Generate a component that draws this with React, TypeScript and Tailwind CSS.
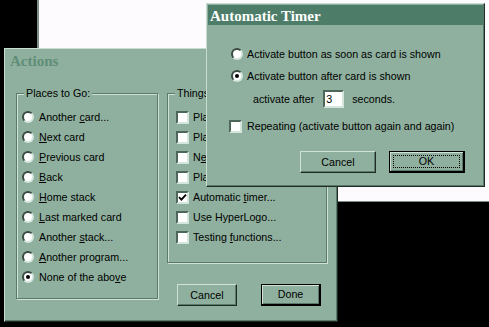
import React from 'react';

const font = { fontFamily: '"Liberation Sans", Arial, sans-serif' };

function Radio({ checked = false }: { checked?: boolean }) {
  return (
    <span className="relative flex h-[12px] w-[12px] shrink-0 items-center justify-center rounded-full border-2 border-t-[#3c4a44] border-l-[#3c4a44] border-r-[#d4e5dc] border-b-[#d4e5dc] bg-white">
      {checked && <span className="h-[4px] w-[4px] rounded-full bg-black" />}
    </span>
  );
}

function Check({ checked = false }: { checked?: boolean }) {
  return (
    <span className="flex h-[13px] w-[13px] shrink-0 items-center justify-center border-2 border-t-[#4d675b] border-l-[#4d675b] border-r-[#d4e5dc] border-b-[#d4e5dc] bg-white">
      {checked && (
        <svg width="9" height="9" viewBox="0 0 9 9">
          <path d="M1 4.2 L3.4 6.6 L8 1.6" stroke="black" strokeWidth="1.8" fill="none" />
        </svg>
      )}
    </span>
  );
}

function Button({ label, def = false, focus = false, w }: { label: string; def?: boolean; focus?: boolean; w: string }) {
  return (
    <div
      className={`relative flex h-[22px] ${w} items-center justify-center bg-[#8fb09e] text-[10.7px] text-black ${
        def
          ? 'border border-black border-r-2 border-b-2 shadow-[inset_1px_1px_0_#d0e2d8,inset_-1px_-1px_0_#5a7a6b]'
          : 'border border-t-[#d0e2d8] border-l-[#d0e2d8] border-r-[#1e2a24] border-b-[#1e2a24] shadow-[inset_-1px_-1px_0_#5a7a6b]'
      }`}
    >
      {focus && <span className="absolute inset-[3px] border border-dotted border-black" />}
      {label}
    </div>
  );
}

function Group({ label, className, children }: { label: string; className: string; children: React.ReactNode }) {
  return (
    <div className={`relative border border-[#5a7a6b] shadow-[1px_1px_0_#d0e2d8,inset_1px_1px_0_#d0e2d8] ${className}`}>
      <span className="absolute left-[7px] top-[-7px] bg-[#8fb09e] px-[2px] text-[10.7px] leading-[13px] text-black">
        {label}
      </span>
      {children}
    </div>
  );
}

const places: [React.ReactNode, boolean][] = [
  [<>Another <u>c</u>ard...</>, false],
  [<><u>N</u>ext card</>, false],
  [<><u>P</u>revious card</>, false],
  [<><u>B</u>ack</>, false],
  [<><u>H</u>ome stack</>, false],
  [<><u>L</u>ast marked card</>, false],
  [<>Another <u>s</u>tack...</>, false],
  [<><u>A</u>nother program...</>, false],
  [<>None of the abo<u>v</u>e</>, true],
];

const things: [React.ReactNode, boolean][] = [
  [<>Play sound...</>, false],
  [<>Play movie...</>, false],
  [<>N<u>e</u>w window...</>, false],
  [<>Play animation...</>, false],
  [<>Automatic <u>t</u>imer...</>, true],
  [<>Use HyperLogo...</>, false],
  [<>Testing <u>f</u>unctions...</>, false],
];

export default function App() {
  return (
    <div className="relative h-[327px] w-[489px] overflow-hidden bg-black" style={font}>
      {/* window behind */}
      <div className="absolute left-[37px] top-0 h-[202px] w-[452px] border-l-2 border-b border-[#7f8f88] bg-[#fdfbfd]" />

      {/* Actions dialog */}
      <div className="absolute left-[4px] top-[48px] flex h-[274px] w-[334px] flex-col border border-t-[#c8ddd2] border-l-[#c8ddd2] border-r-[#1e2a24] border-b-[#1e2a24] bg-[#8fb09e] shadow-[inset_-1px_-1px_0_#5a7a6b]">
        <div className="h-[21px] pl-[5px] pt-[3px] font-['Liberation_Serif'] text-[15px] font-bold leading-[18px] text-[#5f8d78]">
          Actions
        </div>
        <div className="mt-[23px] flex gap-[9px] pl-[11px]">
          <Group label="Places to Go:" className="h-[206px] w-[142px]">
            <div className="flex flex-col pl-[5px] pt-[13px]">
              {places.map(([t, c], i) => (
                <div key={i} className="flex h-[20px] items-center gap-[5px] text-[10.7px] text-black">
                  <Radio checked={c} />
                  <span>{t}</span>
                </div>
              ))}
            </div>
          </Group>
          <div className="flex w-[160px] flex-col">
            <Group label="Things to Do:" className="h-[170px] w-[160px]">
              <div className="flex flex-col pl-[8px] pt-[13px]">
                {things.map(([t, c], i) => (
                  <div key={i} className="flex h-[20px] items-center gap-[4px] text-[10.7px] text-black">
                    <Check checked={c} />
                    <span>{t}</span>
                  </div>
                ))}
              </div>
            </Group>
            <div className="mt-[21px] flex gap-[24px] pl-[10px]">
              <Button label="Cancel" w="w-[60px]" />
              <Button label="Done" def w="w-[60px]" />
            </div>
          </div>
        </div>
      </div>

      {/* Automatic Timer dialog */}
      <div className="absolute left-[206px] top-[3px] flex h-[184px] w-[279px] flex-col border border-t-[#c8ddd2] border-l-[#c8ddd2] border-r-[#1e2a24] border-b-[#1e2a24] bg-[#8fb09e] shadow-[inset_-1px_-1px_0_#5a7a6b]">
        <div className="mx-[1px] mt-[1px] flex h-[20px] items-center bg-[#4d7d69] pl-[2px] pt-[2px] font-['Liberation_Serif'] text-[15px] font-bold text-white">
          Automatic Timer
        </div>
        <div className="flex flex-col text-[10.7px] text-black">
          <div className="mt-[19px] flex h-[20px] items-center gap-[4px] pl-[24px]">
            <Radio />
            <span>Activate button as soon as card is shown</span>
          </div>
          <div className="mt-[2px] flex h-[20px] items-center gap-[4px] pl-[24px]">
            <Radio checked />
            <span>Activate button after card is shown</span>
          </div>
          <div className="mt-[3px] flex h-[20px] items-center pl-[46px]">
            <span>activate after</span>
            <span className="ml-[9px] flex h-[18px] w-[21px] items-center border-2 border-t-[#4d675b] border-l-[#4d675b] border-r-[#d4e5dc] border-b-[#d4e5dc] bg-white pl-[1px]">
              3
            </span>
            <span className="ml-[8px]">seconds.</span>
          </div>
          <div className="mt-[7px] flex h-[20px] items-center gap-[5px] pl-[22px]">
            <Check />
            <span>Repeating (activate button again and again)</span>
          </div>
          <div className="mt-[15px] flex gap-[13px] pl-[93px]">
            <Button label="Cancel" w="w-[76px]" />
            <Button label="OK" def focus w="w-[76px]" />
          </div>
        </div>
      </div>
    </div>
  );
}
